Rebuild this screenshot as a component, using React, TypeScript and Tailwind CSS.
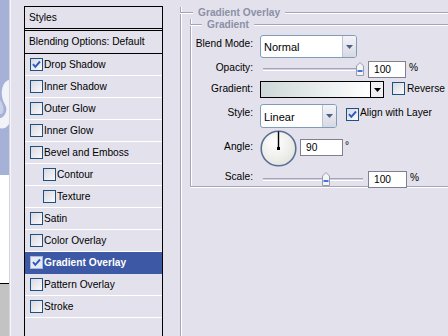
import React from "react";

const F = { fontFamily: '"Liberation Sans", Arial, sans-serif' };

function Check({ checked, light }: { checked?: boolean; light?: boolean }) {
  return (
    <div
      className={
        "w-[13px] h-[13px] shrink-0 border flex items-center justify-center " +
        (light ? "border-[#a9b8e0] bg-[#e9e9f0]" : "border-[#1c5180] bg-gradient-to-br from-[#d8d8e0] to-[#fafafc]")
      }
    >
      {checked && (
        <svg width="11" height="11" viewBox="0 0 11 11">
          <path d="M2 5.2 L4.3 7.8 L9 2.5" fill="none" stroke="#2a5bc4" strokeWidth="1.9" />
        </svg>
      )}
    </div>
  );
}

function Row({ label, checked, indent, selected }: { label: string; checked?: boolean; indent?: boolean; selected?: boolean }) {
  return (
    <div
      className={
        "h-[22px] border-b flex items-center " +
        (selected ? "bg-[#3d59a6] border-[#3d59a6] text-white font-bold" : "border-white text-black")
      }
    >
      <div className={indent ? "ml-[18px]" : "ml-[5px]"}>
        <Check checked={checked} light={selected} />
      </div>
      <span className="ml-[1px] leading-[12px]">{label}</span>
    </div>
  );
}

function Thumb() {
  return (
    <svg width="8" height="14" viewBox="0 0 8 14">
      <path d="M0.5 4 L4 0.5 L7.5 4 L7.5 13.5 L0.5 13.5 Z" fill="#f4f4f8" stroke="#9a9aa8" strokeWidth="1" />
      <rect x="1.5" y="8" width="5" height="2" fill="#3a7ad8" />
    </svg>
  );
}

function Slider({ pos }: { pos: number }) {
  return (
    <div className="relative w-[108px] h-[17px] flex items-center">
      <div className="ml-[3px] w-[100px] h-[3px] border-t border-[#a3a3bb] border-b border-b-white bg-[#d2d2de]" />
      <div className="absolute top-[1px]" style={{ left: pos }}>
        <Thumb />
      </div>
    </div>
  );
}

function Input({ w, value }: { w: string; value: string }) {
  return (
    <div className={w + " h-[17px] border border-[#7f8090] bg-white flex items-center pl-[5px] leading-[12px]"}>{value}</div>
  );
}

function Arrow() {
  return (
    <svg width="7" height="4" viewBox="0 0 7 4">
      <path d="M0 0 L7 0 L3.5 4 Z" fill="#4d6185" />
    </svg>
  );
}

function Select({ w, h, value, pt }: { w: string; h: string; value: string; pt: string }) {
  return (
    <div className={w + " " + h + " border border-[#7f9db9] rounded-[3px] bg-white flex overflow-hidden"}>
      <div className={"flex-1 pl-[3px] leading-[12px] text-[11px] " + pt}>{value}</div>
      <div className="w-[14px] border-l border-[#b8c4d8] bg-gradient-to-b from-[#f4f4f8] to-[#d8d8e4] flex items-center justify-center">
        <Arrow />
      </div>
    </div>
  );
}

function Legend({ text, pre }: { text: string; pre: string }) {
  return (
    <div className="-mt-[5px] -ml-px h-[12px] flex items-center">
      <div className={pre + " h-[2px] border-t border-[#a5a4b8] border-b border-b-white"} />
      <span className="px-[5px] font-bold text-[#8c90a6] leading-[12px]">{text}</span>
      <div className="flex-1 h-[2px] border-t border-[#a5a4b8] border-b border-b-white" />
    </div>
  );
}

function Label({ text, pt }: { text: string; pt: string }) {
  return <div className={"w-[62px] text-right leading-[12px] " + pt}>{text}</div>;
}

export default function App() {
  return (
    <div className="w-[448px] h-[336px] overflow-hidden flex bg-[#e3e2ec] text-[10.2px] text-black" style={F}>
      {/* canvas strip */}
      <div className="w-[10px] h-[336px] shrink-0">
        <svg width="10" height="336" viewBox="0 0 10 336">
          <rect x="0" y="0" width="10" height="175" fill="#a5b1d7" />
          <path d="M10 80 C4 80 1 88 2 96 C3 104 8 106 6 112 C4 118 0 118 0 118 L0 128 C4 130 10 126 10 120 Z" fill="#f2f3f8" />
          <path d="M0 100 C3 104 5 110 2 114 L0 114 Z" fill="#c9d0e8" />
          <rect x="0" y="175" width="10" height="108" fill="#ffffff" />
          <rect x="0" y="283" width="10" height="1" fill="#000000" />
          <rect x="0" y="284" width="10" height="52" fill="#c3c3c3" />
          <rect x="9" y="0" width="1" height="336" fill="#d4d4dc" />
        </svg>
      </div>
      {/* panel */}
      <div className="flex-1 flex border-l border-[#f6f6fa]">
        {/* styles list */}
        <div className="ml-[13px] mt-[6px] w-[139px] h-[340px] border border-black shrink-0">
          <div className="h-[22px] border-b border-black flex items-center pl-[4px] leading-[12px]">Styles</div>
          <div className="h-[1px]" />
          <div className="h-[24px] border-t border-b border-black flex items-center pl-[4px] leading-[12px]">
            Blending Options: Default
          </div>
          <Row label="Drop Shadow" checked />
          <Row label="Inner Shadow" />
          <Row label="Outer Glow" />
          <Row label="Inner Glow" />
          <Row label="Bevel and Emboss" />
          <Row label="Contour" indent />
          <Row label="Texture" indent />
          <Row label="Satin" />
          <Row label="Color Overlay" />
          <Row label="Gradient Overlay" checked selected />
          <Row label="Pattern Overlay" />
          <Row label="Stroke" />
        </div>
        {/* right pane */}
        <div className="ml-[17px] w-[268px] shrink-0">
          <div className="mt-[12px] h-[330px] border-l border-[#a5a4b8] shadow-[inset_1px_0_0_#fff]">
            <Legend text="Gradient Overlay" pre="w-[13px]" />
            <div className="ml-[9px] mt-[5px] h-[168px] border-l border-b border-[#a5a4b8] shadow-[inset_1px_0_0_#fff,0_1px_0_#fff]">
              <Legend text="Gradient" pre="w-[12px]" />
              {/* Blend mode */}
              <div className="mt-[4px] h-[22px] flex items-start">
                <Label text="Blend Mode:" pt="pt-[3px]" />
                <div className="ml-[7px]">
                  <Select w="w-[97px]" h="h-[23px]" value="Normal" pt="pt-[5px]" />
                </div>
              </div>
              {/* Opacity */}
              <div className="mt-[4px] h-[17px] flex items-start">
                <Label text="Opacity:" pt="pt-[1px]" />
                <div className="ml-[7px] flex items-start">
                  <Slider pos={96} />
                  <Input w="w-[38px]" value="100" />
                  <span className="ml-[3px] leading-[12px] pt-[1px]">%</span>
                </div>
              </div>
              {/* Gradient */}
              <div className="mt-[3px] h-[17px] flex items-start">
                <Label text="Gradient:" pt="pt-[2px]" />
                <div className="ml-[7px] flex items-start">
                  <div className="w-[124px] h-[17px] border border-black flex">
                    <div className="flex-1 bg-gradient-to-r from-[#ced8d8] to-[#ffffff]" />
                    <div className="w-[13px] border-l border-black bg-[#f0f0f4] flex items-center justify-center">
                      <svg width="7" height="4" viewBox="0 0 7 4">
                        <path d="M0 0 L7 0 L3.5 4 Z" fill="#000" />
                      </svg>
                    </div>
                  </div>
                  <div className="ml-[8px] mt-[1px]">
                    <Check />
                  </div>
                  <span className="ml-[2px] leading-[12px] pt-[2px]">Reverse</span>
                </div>
              </div>
              {/* Style */}
              <div className="mt-[6px] h-[23px] flex items-start">
                <Label text="Style:" pt="pt-[3px]" />
                <div className="ml-[7px] flex items-start">
                  <Select w="w-[77px]" h="h-[24px]" value="Linear" pt="pt-[6px]" />
                  <div className="ml-[9px] mt-[4px]">
                    <Check checked />
                  </div>
                  <span className="ml-[1px] mt-[3px] leading-[12px]">Align with Layer</span>
                </div>
              </div>
              {/* Angle */}
              <div className="mt-[3px] h-[36px] flex items-start">
                <Label text="Angle:" pt="pt-[11px]" />
                <div className="ml-[7px] flex items-start">
                  <svg width="37" height="37" viewBox="0 0 37 37">
                    <defs>
                      <radialGradient id="dial" cx="40%" cy="35%" r="70%">
                        <stop offset="0%" stopColor="#ffffff" />
                        <stop offset="100%" stopColor="#e4e4de" />
                      </radialGradient>
                    </defs>
                    <circle cx="18.5" cy="18.5" r="17.3" fill="url(#dial)" stroke="#5a6f98" strokeWidth="1.6" />
                    <line x1="18.5" y1="18.5" x2="18.5" y2="1.5" stroke="#000" strokeWidth="1.4" />
                    <rect x="17" y="17" width="3" height="3" fill="#000" />
                  </svg>
                  <div className="ml-[3px] mt-[9px]">
                    <Input w="w-[43px]" value="90" />
                  </div>
                  <span className="ml-[2px] mt-[10px] leading-[12px]">°</span>
                </div>
              </div>
              {/* Scale */}
              <div className="mt-[5px] h-[17px] flex items-start">
                <Label text="Scale:" pt="pt-[0px]" />
                <div className="ml-[7px] flex items-start">
                  <Slider pos={62} />
                  <Input w="w-[39px]" value="100" />
                  <span className="ml-[3px] leading-[12px] pt-[1px]">%</span>
                </div>
              </div>
            </div>
          </div>
        </div>
      </div>
    </div>
  );
}
